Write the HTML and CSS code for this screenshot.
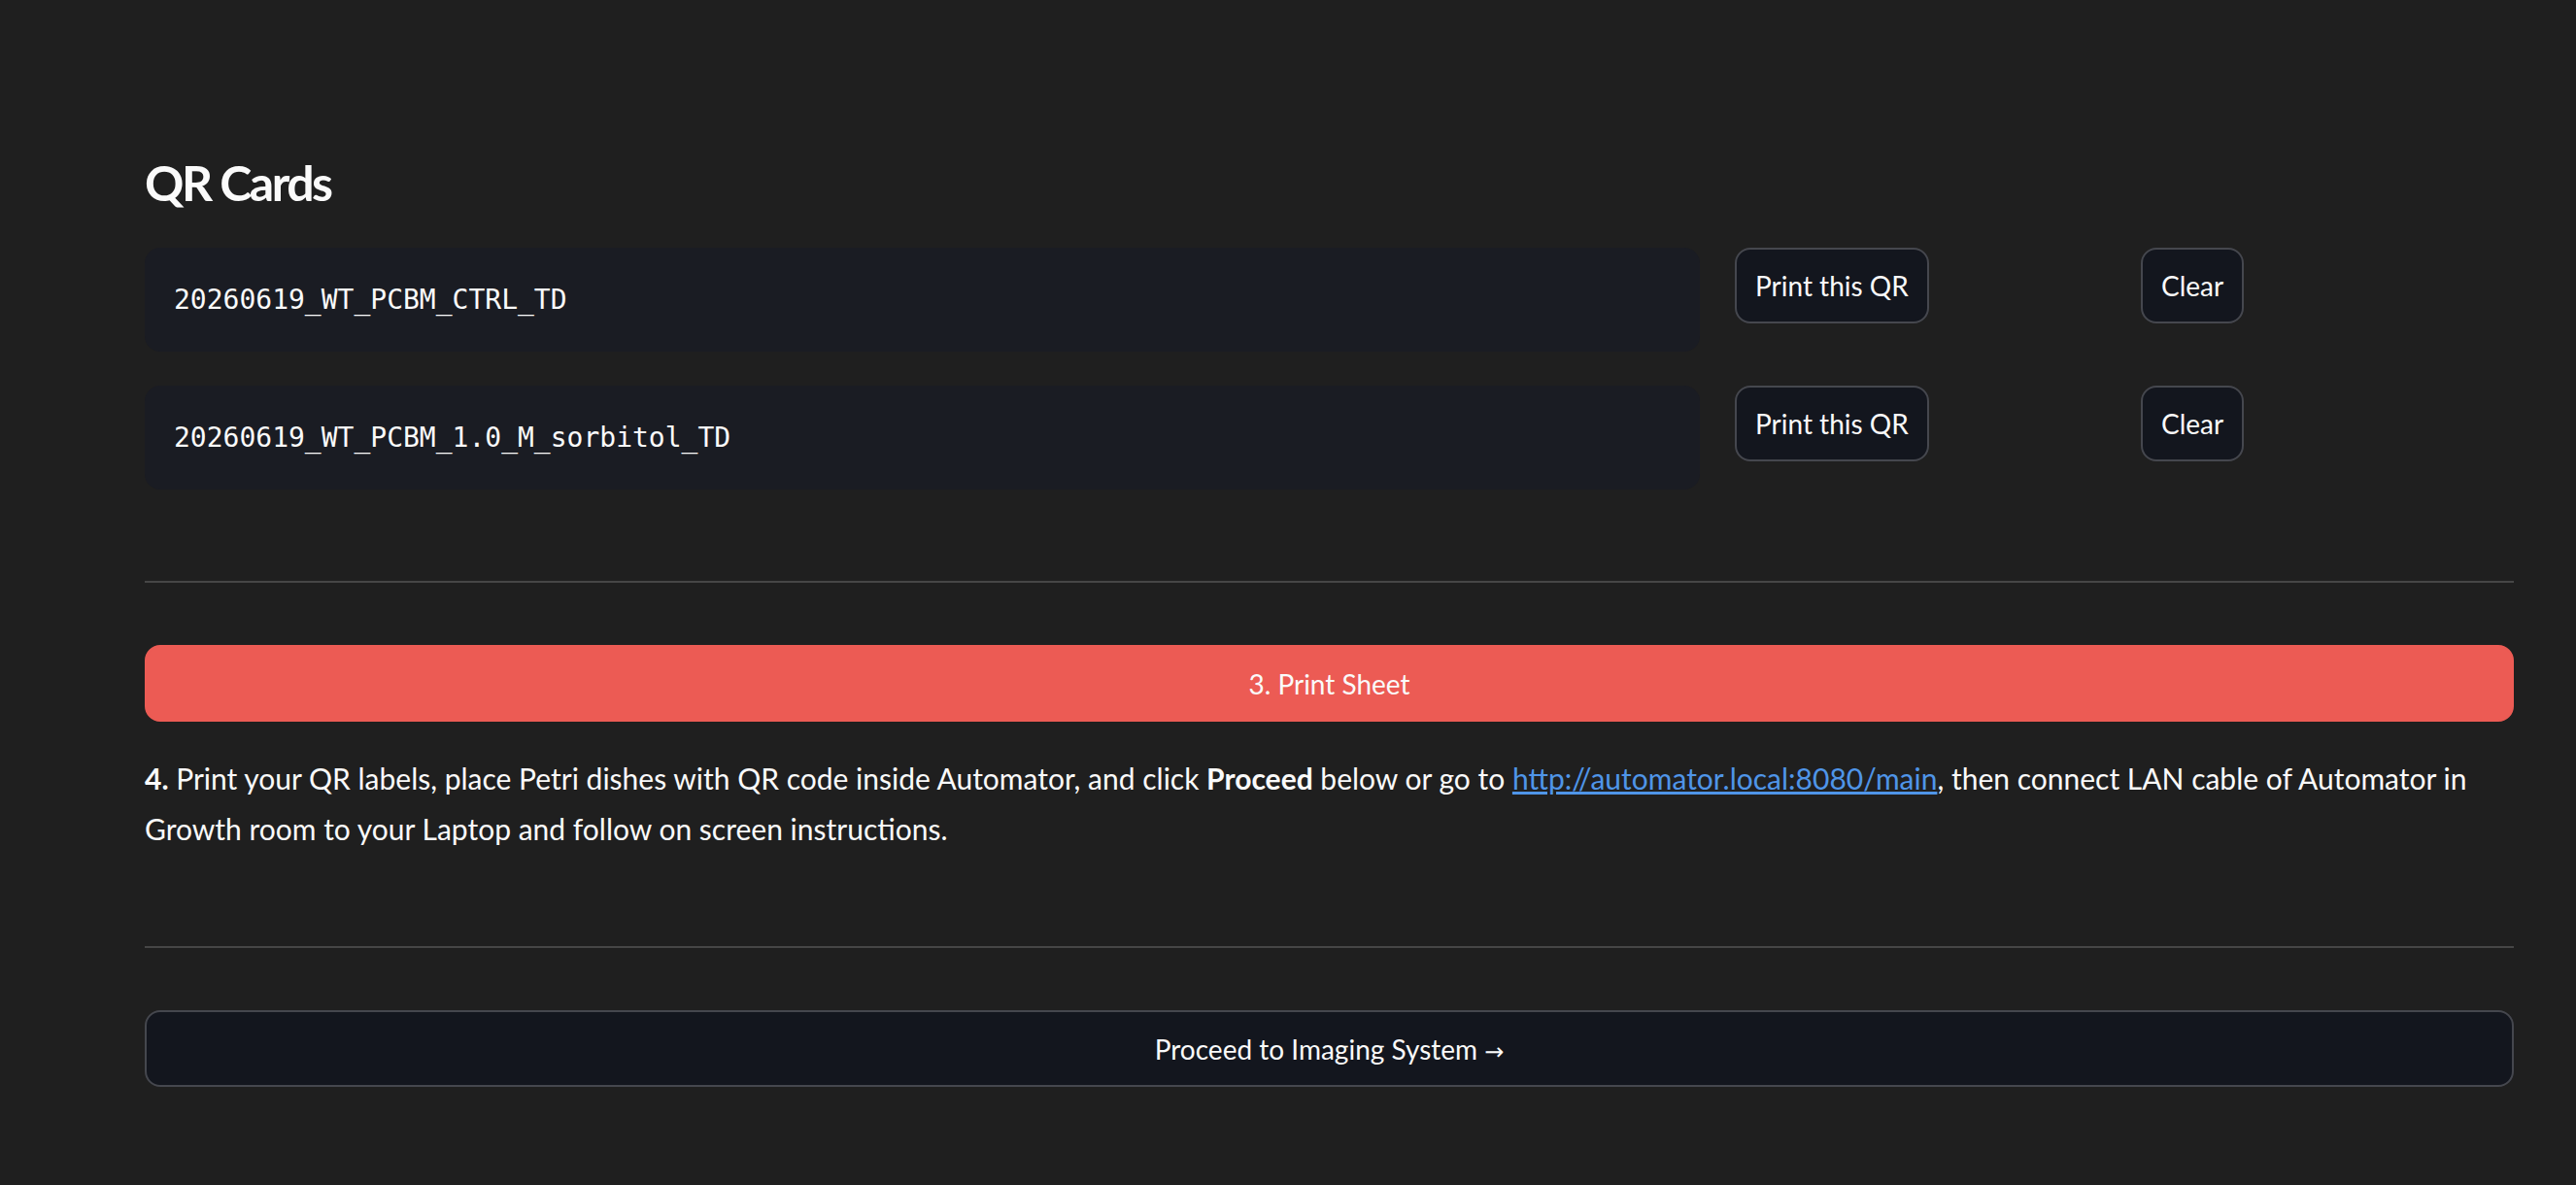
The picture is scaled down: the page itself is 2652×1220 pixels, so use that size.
FILE: index.html
```html
<!DOCTYPE html>
<html>
<head>
    <title>QR Cards</title>
    <link rel="stylesheet" href="styles.css">
</head>
<body>
    <main class="page">
        <h3 class="section-title">QR Cards</h3>

        <!-- One row per QR card: name, print, clear -->
        <div class="qr-list">
            <div class="qr-row">
                <div class="qr-name"><code>20260619_WT_PCBM_CTRL_TD</code></div>
                <div><button class="btn">Print this QR</button></div>
                <div><button class="btn">Clear</button></div>
            </div>
            <div class="qr-row">
                <div class="qr-name"><code>20260619_WT_PCBM_1.0_M_sorbitol_TD</code></div>
                <div><button class="btn">Print this QR</button></div>
                <div><button class="btn">Clear</button></div>
            </div>
        </div>

        <hr class="divider">

        <button class="btn btn-wide btn-primary">3. Print Sheet</button>

        <p class="step">
            <strong>4.</strong> Print your QR labels, place Petri dishes with QR code inside Automator, and click <strong>Proceed</strong> below or go to <a href="http://automator.local:8080/main">http://automator.local:8080/main</a>, then connect LAN cable of Automator in Growth room to your Laptop and follow on screen instructions.
        </p>

        <hr class="divider divider-low">

        <button class="btn btn-wide">Proceed to Imaging System <span class="arrow">→</span></button>
    </main>
</body>
</html>
```

FILE: styles.css
```css
body {
    margin: 0;
    background-color: #1f1f1f;
    color: #fafafa;
    font-family: Lato, "Noto Sans", sans-serif;
    font-size: 28px;
}
.page {
    padding: 156px 64px 0 149px;
}
.section-title {
    font-size: 50px;
    font-weight: 700;
    letter-spacing: -2.5px;
    line-height: 64px;
    margin: 0 0 35px 0;
}
.qr-list {
    display: flex;
    flex-direction: column;
    gap: 35px;
}
.qr-row {
    display: grid;
    grid-template-columns: 1605fr 386fr 384fr;
    column-gap: 32px;
    align-items: start;
}
.qr-name {
    display: flex;
    align-items: center;
    height: 107px;
    padding: 0 30px;
    margin-right: 4px;
    background-color: #1a1c23;
    border-radius: 16px;
}
.qr-name code {
    font-family: "DejaVu Sans Mono", "Liberation Mono", monospace;
    font-size: 28px;
    color: #fafafa;
}
.btn {
    height: 78px;
    padding: 0 19px;
    background-color: #13161e;
    color: #fafafa;
    border: 2px solid #45474e;
    border-radius: 16px;
    font-family: inherit;
    font-size: 28px;
    cursor: pointer;
}
.btn:hover {
    border-color: #ec5b54;
}
.btn-wide {
    display: block;
    width: 100%;
    height: 79px;
}
.btn-primary {
    background-color: #ec5b54;
    border-color: #ec5b54;
}
.arrow {
    font-family: "DejaVu Sans", sans-serif;
    font-size: 24px;
}
.divider {
    height: 2px;
    border: none;
    background-color: #464646;
    margin: 94px 0 64px 0;
}
.divider-low {
    margin-top: 95px;
}
.step {
    margin: 32px 0 0 0;
    font-size: 30px;
    line-height: 52px;
}
.step a {
    color: #4f95e8;
}
```
